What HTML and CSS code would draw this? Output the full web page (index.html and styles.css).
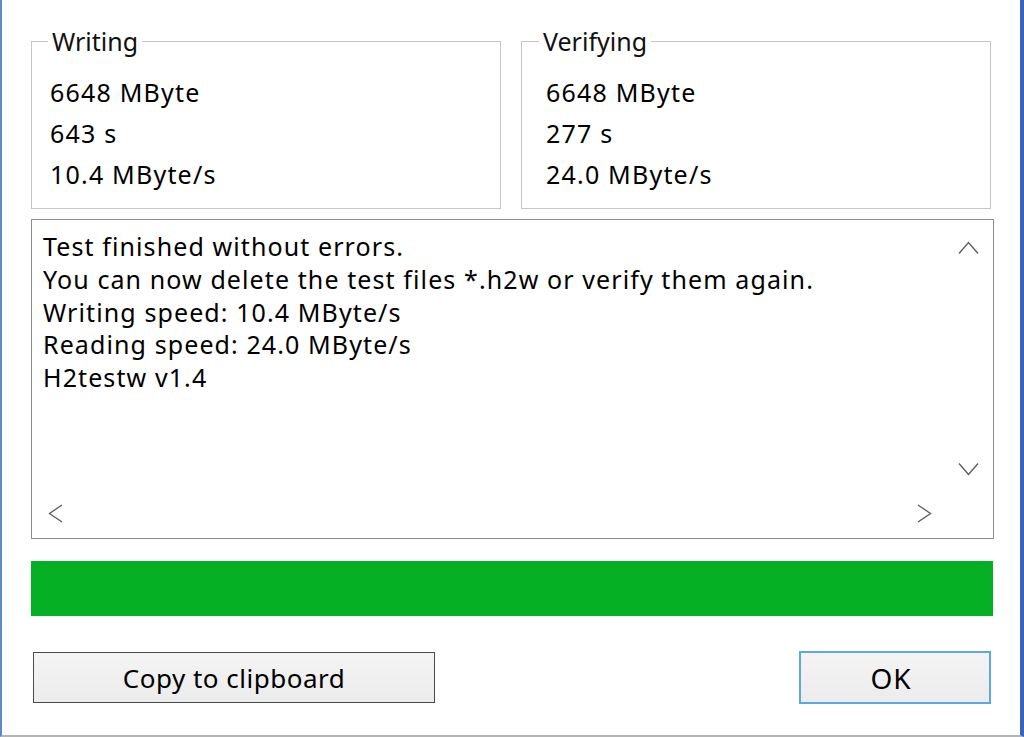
FILE: index.html
```html
<!DOCTYPE html>
<html lang="en">
<head>
<meta charset="utf-8">
<title>H2testw</title>
<link rel="stylesheet" href="styles.css">
</head>
<body>
<div class="window">
  <div class="groups">
    <fieldset class="group group-left">
      <legend>Writing</legend>
      <div class="line">6648 MByte</div>
      <div class="line">643 s</div>
      <div class="line">10.4 MByte/s</div>
    </fieldset>
    <fieldset class="group group-right">
      <legend>Verifying</legend>
      <div class="line">6648 MByte</div>
      <div class="line">277 s</div>
      <div class="line">24.0 MByte/s</div>
    </fieldset>
  </div>

  <div class="log">
    <div class="log-text">
      <div>Test finished without errors.</div>
      <div>You can now delete the test files *.h2w or verify them again.</div>
      <div>Writing speed: 10.4 MByte/s</div>
      <div>Reading speed: 24.0 MByte/s</div>
      <div>H2testw v1.4</div>
    </div>
    <div class="vscroll">
      <svg class="arrow-v" width="21" height="13" viewBox="0 0 21 13"><path d="M1 12.5 L10.5 1.5 L20 12.5" fill="none" stroke="#5a5a5a" stroke-width="1.3"/></svg>
      <svg class="arrow-v" width="21" height="13" viewBox="0 0 21 13"><path d="M1 0.5 L10.5 11.5 L20 0.5" fill="none" stroke="#5a5a5a" stroke-width="1.3"/></svg>
    </div>
    <div class="hscroll">
      <svg class="arrow-h" width="15" height="19" viewBox="0 0 15 19"><path d="M14 1 L1.5 9.5 L14 18" fill="none" stroke="#5a5a5a" stroke-width="1.3"/></svg>
      <svg class="arrow-h" width="15" height="19" viewBox="0 0 15 19"><path d="M1 1 L13.5 9.5 L1 18" fill="none" stroke="#5a5a5a" stroke-width="1.3"/></svg>
    </div>
    <div class="corner"></div>
  </div>

  <div class="progress"><div class="progress-fill" style="width:100%"></div></div>

  <div class="buttons">
    <button class="btn btn-copy">Copy to clipboard</button>
    <button class="btn btn-ok">OK</button>
  </div>
</div>
</body>
</html>
```

FILE: styles.css
```css
* { box-sizing: border-box; }

html, body {
  margin: 0;
  padding: 0;
  background: #ffffff;
}

body {
  font-family: "Noto Sans", "Open Sans", sans-serif;
  color: #000000;
}

.window {
  width: 1024px;
  height: 737px;
  border-left: 2px solid #5f88cc;
  border-right: 4px solid #3a64bb;
  border-bottom: 2px solid #b4b4b4;
  padding: 27px 26px 0 29px;
  display: flex;
  flex-direction: column;
  background: #ffffff;
}

.groups {
  display: grid;
  grid-template-columns: 470px 470px;
  column-gap: 20px;
}

.group {
  margin: 0;
  padding: 17px 0 13px 18px;
  border: 1px solid #c6c6c6;
  min-width: 0;
}

.group-right {
  padding-left: 24px;
}

.group legend {
  margin-left: -2px;
  padding: 0 4px;
  font-size: 25px;
  line-height: 28px;
  color: #111;
}

.group-right legend {
  margin-left: -7px;
}

.line {
  font-size: 25px;
  line-height: 41px;
  letter-spacing: 1.2px;
  white-space: nowrap;
}

.log {
  margin-top: 10px;
  height: 320px;
  border: 1px solid #8c8c8c;
  display: grid;
  grid-template-columns: 1fr 50px;
  grid-template-rows: 1fr 50px;
}

.log-text {
  padding: 10px 0 0 11px;
  font-size: 25px;
  line-height: 32.75px;
  letter-spacing: 1.1px;
  white-space: nowrap;
  overflow: hidden;
}

.vscroll {
  display: flex;
  flex-direction: column;
  justify-content: space-between;
  align-items: center;
  padding: 21px 0 12px 0;
}

.hscroll {
  display: flex;
  justify-content: space-between;
  align-items: center;
  padding: 0 11px 0 16px;
}

.arrow-v, .arrow-h { display: block; }

.progress {
  margin-top: 22px;
  margin-right: 1px;
  height: 55px;
  background: #e6e6e6;
}

.progress-fill {
  height: 100%;
  background: #06b025;
}

.buttons {
  margin-top: 35px;
  margin-right: 3px;
  margin-left: 2px;
  display: flex;
  justify-content: space-between;
  align-items: center;
}

.btn {
  font-family: "Noto Sans", "Open Sans", sans-serif;
  font-size: 26px;
  color: #000;
  background: linear-gradient(#f4f4f4, #ececec);
  padding: 0;
  margin: 0;
}

.btn-copy {
  width: 402px;
  height: 51px;
  border: 1px solid #4a4a4a;
  letter-spacing: 0.5px;
}

.btn-ok {
  width: 192px;
  height: 53px;
  border: 2px solid #5ea8dd;
  font-size: 28px;
  letter-spacing: 1px;
  padding-right: 8px;
}
```
